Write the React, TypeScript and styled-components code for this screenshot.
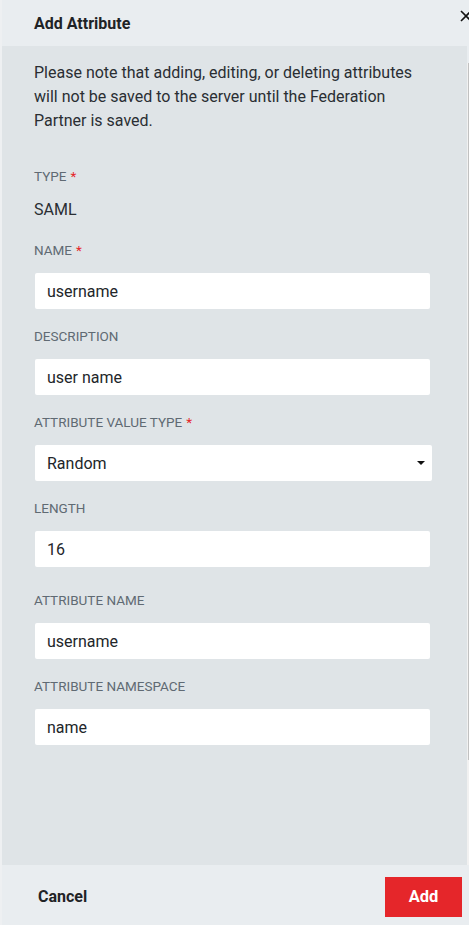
import React from 'react';
import styled, { createGlobalStyle } from 'styled-components';

const GlobalStyle = createGlobalStyle`
  html, body {
    margin: 0;
    padding: 0;
    background: #eef0f2;
    font-family: Roboto, "Liberation Sans", Arial, sans-serif;
  }
  * { box-sizing: border-box; }
`;

const Panel = styled.div`
  height: 925px;
  margin-left: 2px;
  width: 467px;
  display: flex;
  flex-direction: column;
  background: #e9edf0;
  overflow: hidden;
`;

const Header = styled.div`
  height: 46px;
  flex-shrink: 0;
  position: relative;
  display: flex;
  align-items: center;
  padding-left: 32px;
  background: #e9edf0;
`;

const Title = styled.h2`
  margin: 0;
  font-size: 16px;
  font-weight: 700;
  color: #1f2326;
`;

const Close = styled.button`
  position: absolute;
  right: -4px;
  top: 10px;
  border: 0;
  background: none;
  padding: 0;
  width: 14px;
  height: 14px;
  cursor: pointer;
`;

const Middle = styled.div`
  flex: 1;
  display: flex;
  min-height: 0;
`;

const Body = styled.div`
  flex: 1;
  background: #dfe4e7;
  padding: 15px 35px 0 32px;
`;

const Scrollbar = styled.div`
  width: 4px;
  background: #f1f1f1;
  margin-top: 17px;
  display: flex;
  flex-direction: column;
`;

const Thumb = styled.div`
  width: 3px;
  margin-left: 1px;
  height: 697px;
  background: #c1c1c1;
`;

const Note = styled.p`
  margin: 0 0 35px;
  font-size: 16px;
  line-height: 24px;
  color: #2a2e33;
`;

const Field = styled.div<{ $gap?: number }>`
  display: flex;
  flex-direction: column;
  margin-bottom: ${p => p.$gap ?? 19}px;
`;

const Label = styled.label`
  font-size: 13.5px;
  line-height: 16px;
  color: #606a73;
  text-transform: uppercase;
  margin-bottom: 15px;
`;

const Req = styled.span`
  color: #e5262a;
  margin-left: 4px;
`;

const Value = styled.div`
  font-size: 16px;
  color: #2a2e33;
  line-height: 20px;
  margin-top: 1px;
`;

const Input = styled.div<{ $wide?: boolean }>`
  width: ${p => (p.$wide ? 397 : 395)}px;
  height: 36px;
  margin-left: 1px;
  background: #fff;
  border-radius: 2px;
  display: flex;
  align-items: center;
  justify-content: space-between;
  padding: 0 7px 0 12px;
  font-size: 16px;
  color: #22262a;
`;

const Caret = styled.span`
  width: 0;
  height: 0;
  border-left: 4.5px solid transparent;
  border-right: 4.5px solid transparent;
  border-top: 4.5px solid #111;
`;

const Footer = styled.div`
  height: 60px;
  flex-shrink: 0;
  display: flex;
  align-items: center;
  justify-content: space-between;
  padding: 3px 7px 0 36px;
  background: #e9edf0;
`;

const Cancel = styled.button`
  border: 0;
  background: none;
  font-family: inherit;
  font-size: 16px;
  font-weight: 700;
  color: #1f2326;
  padding: 0;
  cursor: pointer;
`;

const AddButton = styled.button`
  width: 77px;
  height: 40px;
  border: 0;
  background: #e5262a;
  color: #fff;
  font-family: inherit;
  font-size: 16.5px;
  font-weight: 700;
  cursor: pointer;
`;

const fields: { label: string; value: string; req?: boolean; select?: boolean; gap?: number }[] = [
  { label: 'Name', value: 'username', req: true },
  { label: 'Description', value: 'user name' },
  { label: 'Attribute Value Type', value: 'Random', req: true, select: true },
  { label: 'Length', value: '16', gap: 25 },
  { label: 'Attribute Name', value: 'username' },
  { label: 'Attribute Namespace', value: 'name' },
];

export default function App() {
  return (
    <>
      <GlobalStyle />
      <Panel>
        <Header>
          <Title>Add Attribute</Title>
          <Close aria-label="Close">
            <svg width="12" height="12" viewBox="0 0 12 12">
              <path d="M1 1L11 11M11 1L1 11" stroke="#111" strokeWidth="1.6" />
            </svg>
          </Close>
        </Header>
        <Middle>
          <Body>
            <Note>
              Please note that adding, editing, or deleting attributes will not be saved to the server until the
              Federation Partner is saved.
            </Note>
            <Field $gap={22}>
              <Label>
                Type<Req>*</Req>
              </Label>
              <Value>SAML</Value>
            </Field>
            {fields.map(f => (
              <Field key={f.label} $gap={f.gap}>
                <Label>
                  {f.label}
                  {f.req && <Req>*</Req>}
                </Label>
                <Input $wide={f.select}>
                  <span>{f.value}</span>
                  {f.select && <Caret />}
                </Input>
              </Field>
            ))}
          </Body>
          <Scrollbar>
            <Thumb />
          </Scrollbar>
        </Middle>
        <Footer>
          <Cancel>Cancel</Cancel>
          <AddButton>Add</AddButton>
        </Footer>
      </Panel>
    </>
  );
}
